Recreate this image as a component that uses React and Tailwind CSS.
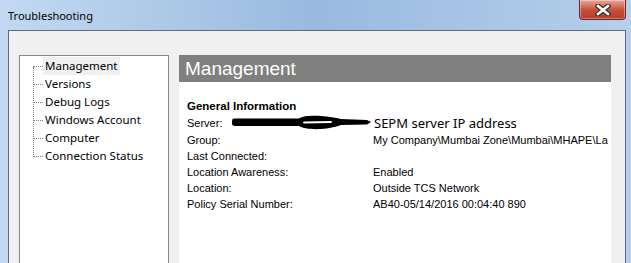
import React from "react";

const treeItems = [
  "Management",
  "Versions",
  "Debug Logs",
  "Windows Account",
  "Computer",
  "Connection Status",
];

const rows = [
  ["Group:", "My Company\\Mumbai Zone\\Mumbai\\MHAPE\\La"],
  ["Last Connected:", ""],
  ["Location Awareness:", "Enabled"],
  ["Location:", "Outside TCS Network"],
  ["Policy Serial Number:", "AB40-05/14/2016 00:04:40 890"],
];

function CloseButton() {
  return (
    <div className="mr-[5px] w-[47px] h-[20px] rounded-b-[4px] border border-t-0 border-[#6e2a20] bg-gradient-to-b from-[#e9a99a] via-[#c9523f] to-[#b53a26] flex items-center justify-center shadow-[inset_0_0_0_1px_rgba(255,255,255,0.35)]">
      <svg width="16" height="12" viewBox="0 0 16 12">
        <path d="M3 2 L13 10 M13 2 L3 10" stroke="#3b2c2c" strokeWidth="5" strokeLinecap="square" />
        <path d="M3 2 L13 10 M13 2 L3 10" stroke="#ffffff" strokeWidth="2.6" strokeLinecap="square" />
      </svg>
    </div>
  );
}

export default function App() {
  return (
    <div
      className="w-[631px] h-[263px] overflow-hidden flex flex-col bg-gradient-to-r from-[#c3d9f1] via-[#98badf] to-[#b5cfec]"
      style={{ fontFamily: '"Noto Sans", "Open Sans", sans-serif' }}
    >
      {/* Title bar */}
      <div className="h-[30px] flex items-start justify-between shrink-0">
        <div className="pl-[8px] pt-[8px] text-[11px] leading-[16px] text-black">Troubleshooting</div>
        <CloseButton />
      </div>

      {/* Client area */}
      <div className="flex-1 ml-[8px] mr-[5px] border border-b-0 border-[#5d6b7c] bg-[#f0f0f0] flex items-start pt-[24px] pl-[10px]">
        {/* Tree panel */}
        <div className="w-[150px] h-[260px] shrink-0 bg-white border border-[#828790] pt-[1px]">
          <div className="relative ml-[13px]">
            <div className="absolute left-0 top-[10px] h-[90px] border-l border-dotted border-[#808080]" />
            {treeItems.map((t, i) => (
              <div key={t} className="flex items-center h-[18px]">
                <div className="w-[10px] border-t border-dotted border-[#808080]" />
                <div
                  className={
                    "px-[2px] h-[18px] flex items-center text-[11.5px] text-black " +
                    (i === 0 ? "bg-[#f0f0f0]" : "")
                  }
                >
                  {t}
                </div>
              </div>
            ))}
          </div>
        </div>

        {/* Right panel */}
        <div className="ml-[10px] w-[432px] h-[260px] flex flex-col">
          <div
            className="h-[27px] bg-[#808080] text-white text-[19px] leading-[27px] pl-[6px] shrink-0"
            style={{ fontFamily: '"Liberation Sans", Arial, sans-serif' }}
          >
            Management
          </div>
          <div
            className="flex-1 bg-white pl-[8px] pt-[16px] text-[11px] text-black"
            style={{ fontFamily: '"Liberation Sans", Arial, sans-serif' }}
          >
            <div className="font-bold leading-[16px] text-[11.5px]">General Information</div>
            <div className="flex items-center h-[18px]">
              <div className="w-[44px] leading-[16px]">Server:</div>
              <svg width="142" height="18" viewBox="0 0 142 18" className="shrink-0">
                <path
                  d="M1 7 C1 5 2 4.5 4 4.5 L68 4.5 C72 2 80 1.5 90 2 C98 2.5 104 3.5 110 5 L136 6 L140 8 L136 10.5 L110 11 C104 13 98 14.5 90 15 C80 15.5 72 14.5 68 12 L4 12 C2 12 1 11 1 9.5 Z"
                  fill="#000"
                />
                <path d="M73 8.5 L100 8" stroke="#fff" strokeWidth="1.8" strokeLinecap="round" />
              </svg>
              <div
                className="text-[13px] leading-[16px] -mt-[1px] ml-[1px] whitespace-nowrap"
                style={{ fontFamily: '"Noto Sans", sans-serif' }}
              >
                SEPM server IP address
              </div>
            </div>
            {rows.map(([k, v]) => (
              <div key={k} className="flex h-[16px] leading-[16px]">
                <div className="w-[186px] shrink-0">{k}</div>
                <div className="whitespace-nowrap">{v}</div>
              </div>
            ))}
          </div>
        </div>
      </div>
    </div>
  );
}
